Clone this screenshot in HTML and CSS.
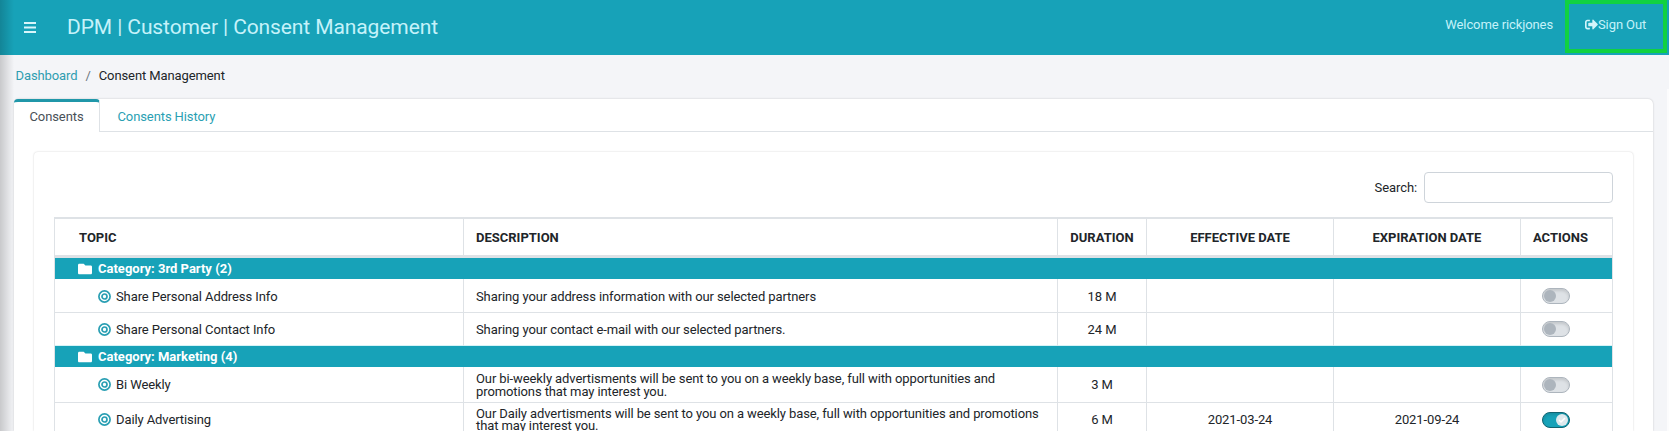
FILE: index.html
```html
<!DOCTYPE html>
<html lang="en">
<head>
<meta charset="utf-8">
<title>Consent Management</title>
<link rel="stylesheet" href="styles.css">
</head>
<body>
<svg class="defs" width="0" height="0">
  <symbol id="folder" viewBox="0 0 512 512"><path d="M464 128H272l-64-64H48C21 64 0 85 0 112v288c0 27 21 48 48 48h416c27 0 48-21 48-48V176c0-27-21-48-48-48z"/></symbol>
  <symbol id="target" viewBox="0 0 13 13"><g fill="none" stroke="currentColor" stroke-width="1.7"><circle cx="6.5" cy="6.5" r="5.600"/><circle cx="6.5" cy="6.500" r="2.500"/></g></symbol>
</svg>
<header class="topbar">
  <svg class="menu" viewBox="0 0 12 11"><path d="M0 1h12M0 5.5h12M0 10h12" stroke="currentColor" stroke-width="1.8"/></svg>
  <h1 class="title">DPM | Customer | Consent Management</h1>
  <span class="welcome">Welcome rickjones</span>
  <a class="signout"><svg class="exit" viewBox="0 0 512 512"><path d="M497 273 329 441c-15 15-41 4.500-41-17v-96H152c-13.300 0-24-10.700-24-24v-96c0-13.300 10.700-24 24-24h136V88c0-21.400 25.900-32 41-17l168 168c9.300 9.400 9.300 24.600 0 34zM192 436v-40c0-6.600-5.400-12-12-12H96c-17.700 0-32-14.300-32-32V160c0-17.700 14.300-32 32-32h84c6.600 0 12-5.400 12-12V76c0-6.600-5.400-12-12-12H96c-53 0-96 43-96 96v192c0 53 43 96 96 96h84c6.600 0 12-5.400 12-12z"/></svg><span>Sign Out</span></a>
</header>
<nav class="crumbs"><a>Dashboard</a><span class="sep">/</span><span>Consent Management</span></nav>
<main class="card">
  <div class="tabs"><a class="tab active">Consents</a><a class="tab">Consents History</a></div>
  <section class="panel">
    <label class="search"><span>Search:</span><input type="text"></label>
    <div class="table">
      <div class="row head"><div>TOPIC</div><div>DESCRIPTION</div><div>DURATION</div><div>EFFECTIVE DATE</div><div>EXPIRATION DATE</div><div>ACTIONS</div></div>
      <div class="category"><svg><use href="#folder"/></svg><span>Category: 3rd Party (2)</span></div>
      <div class="row first"><div class="topic"><svg><use href="#target"/></svg><span>Share Personal Address Info</span></div><div>Sharing your address information with our selected partners</div><div>18 M</div><div></div><div></div><div><i class="switch"></i></div></div>
      <div class="row second"><div class="topic"><svg><use href="#target"/></svg><span>Share Personal Contact Info</span></div><div>Sharing your contact e-mail with our selected partners.</div><div>24 M</div><div></div><div></div><div><i class="switch"></i></div></div>
      <div class="category"><svg><use href="#folder"/></svg><span>Category: Marketing (4)</span></div>
      <div class="row tall"><div class="topic"><svg><use href="#target"/></svg><span>Bi Weekly</span></div><div>Our bi-weekly advertisments will be sent to you on a weekly base, full with opportunities and<br>promotions that may interest you.</div><div>3 M</div><div></div><div></div><div><i class="switch"></i></div></div>
      <div class="row last"><div class="topic"><svg><use href="#target"/></svg><span>Daily Advertising</span></div><div>Our Daily advertisments will be sent to you on a weekly base, full with opportunities and promotions<br>that may interest you.</div><div>6 M</div><div>2021-03-24</div><div>2021-09-24</div><div><i class="switch on"><svg viewBox="0 0 12 12"><path d="m3 6 2 2 4-4" fill="none" stroke="#fff" stroke-width="1.5"/></svg></i></div></div>
    </div>
  </section>
</main>
<div class="edge"></div>
<div class="gutter"></div>
</body>
</html>
```

FILE: styles.css
```css
* { box-sizing: border-box; }
body { margin: 0; height: 431px; overflow: hidden; background: #f4f5f8; color: #212529; font: 13px/16px Roboto, sans-serif; letter-spacing: -0.1px; }
.defs { position: absolute; }
.topbar { height: 55px; display: flex; background: #17a2b8; color: #c5f2fa; }
.menu { width: 12px; height: 11px; margin: 22px 31px 0 24px; color: #d9f6fb; flex: none; }
.title { margin: 13px auto 0 0; font-size: 21px; line-height: 28px; font-weight: 400; }
.welcome { margin: 17px 12px 0 0; }
.signout { width: 102px; height: 53px; margin-right: 2px; border: 4px solid #11d141; display: flex; padding: 13px 0 0 16px; }
.exit { width: 13px; height: 13px; margin-top: 1px; fill: #d3f5fb; }
.crumbs { height: 44px; display: flex; padding: 13px 0 0 15.500px; }
.crumbs a { color: #2e9db0; }
.sep { color: #6c757d; margin: 0 8px; }
.card { width: 1639px; margin-left: 14px; height: 332px; background: #fff; border-radius: 5px 5px 0 0; box-shadow: 0 0 2px rgba(0,0,0,.22); }
.tabs { height: 33px; display: flex; border-bottom: 1px solid #dee2e6; }
.tab { height: 33px; padding: 10px 16px 0 17.500px; color: #2a9fb3; }
.tab.active { width: 86px; padding: 7px 0 0 15.500px; border-top: 3px solid #2097a9; border-right: 1px solid #dee2e6; border-radius: 4px 4px 0 0; background: #fff; color: #495057; }
.panel { width: 1599px; height: 279px; margin: 20px 0 0 20px; padding: 20px 20px 0; border-radius: 4px 4px 0 0; box-shadow: 0 0 2px rgba(0,0,0,.2); }
.search { display: flex; justify-content: flex-end; align-items: center; gap: 7px; height: 31px; }
.search input { width: 189px; height: 31px; border: 1px solid #ced4da; border-radius: 4px; background: #fff; }
.table { width: 1559px; margin-top: 14px; border: 1px solid #dee2e6; border-top-width: 2px; border-bottom: 0; }
.row { display: grid; grid-template-columns: 409px 594px 89px 187px 187px 1fr; }
.row > div { display: flex; align-items: center; justify-content: center; border-right: 1px solid #dee2e6; border-bottom: 1px solid #dee2e6; line-height: 13px; }
.row > div:nth-child(1) { justify-content: flex-start; padding-left: 42px; }
.row > div:nth-child(2) { justify-content: flex-start; padding-left: 12px; white-space: nowrap; }
.row > div:last-child { border-right: 0; justify-content: flex-start; padding-left: 21px; }
.row.head { height: 39px; font-weight: 700; letter-spacing: 0; }
.row.head > div { border-bottom: 3px solid #dee2e6; }
.row.head > div:first-child { padding-left: 24px; }
.row.head > div:last-child { padding-left: 12px; }
.first { height: 34px; }
.first > div { padding-top: 1px; }
.second { height: 33px; }
.second > div { border-bottom-color: #d5f3f7; }
.tall { height: 36px; }
.last { height: 29px; }
.last > div { padding-top: 4px; border-bottom: 0; line-height: 12px; }
.category { display: flex; align-items: center; gap: 6px; height: 21px; padding-left: 23px; background: #17a2b8; color: #fff; font-weight: 700; letter-spacing: 0; }
.category svg { width: 14px; height: 14px; fill: #fff; }
.topic svg { width: 13px; height: 13px; margin: 0 5.500px 0 .5px; color: #2a9fb3; flex: none; }
.switch { width: 28px; height: 16px; border: 1px solid #adb5bd; border-radius: 8px; background: #dee2e6; display: flex; padding: 1px; box-shadow: inset 0 2px 3px rgba(0,0,0,.12); }
.switch::before { content: ""; width: 12px; height: 12px; border-radius: 50%; background: #adb5bd; }
.switch.on { background: #17a2b8; border-color: #116370; justify-content: flex-end; }
.switch.on::before { display: none; }
.switch svg { width: 12px; height: 12px; border-radius: 50%; background: #dee9ed; }
.edge { position: absolute; left: 0; top: 0; width: 14px; height: 431px; background: linear-gradient(90deg, rgba(0,0,0,.18), transparent); }
.gutter { position: absolute; right: 0; top: 89px; width: 2px; height: 342px; background: #fcfcfd; }
```
